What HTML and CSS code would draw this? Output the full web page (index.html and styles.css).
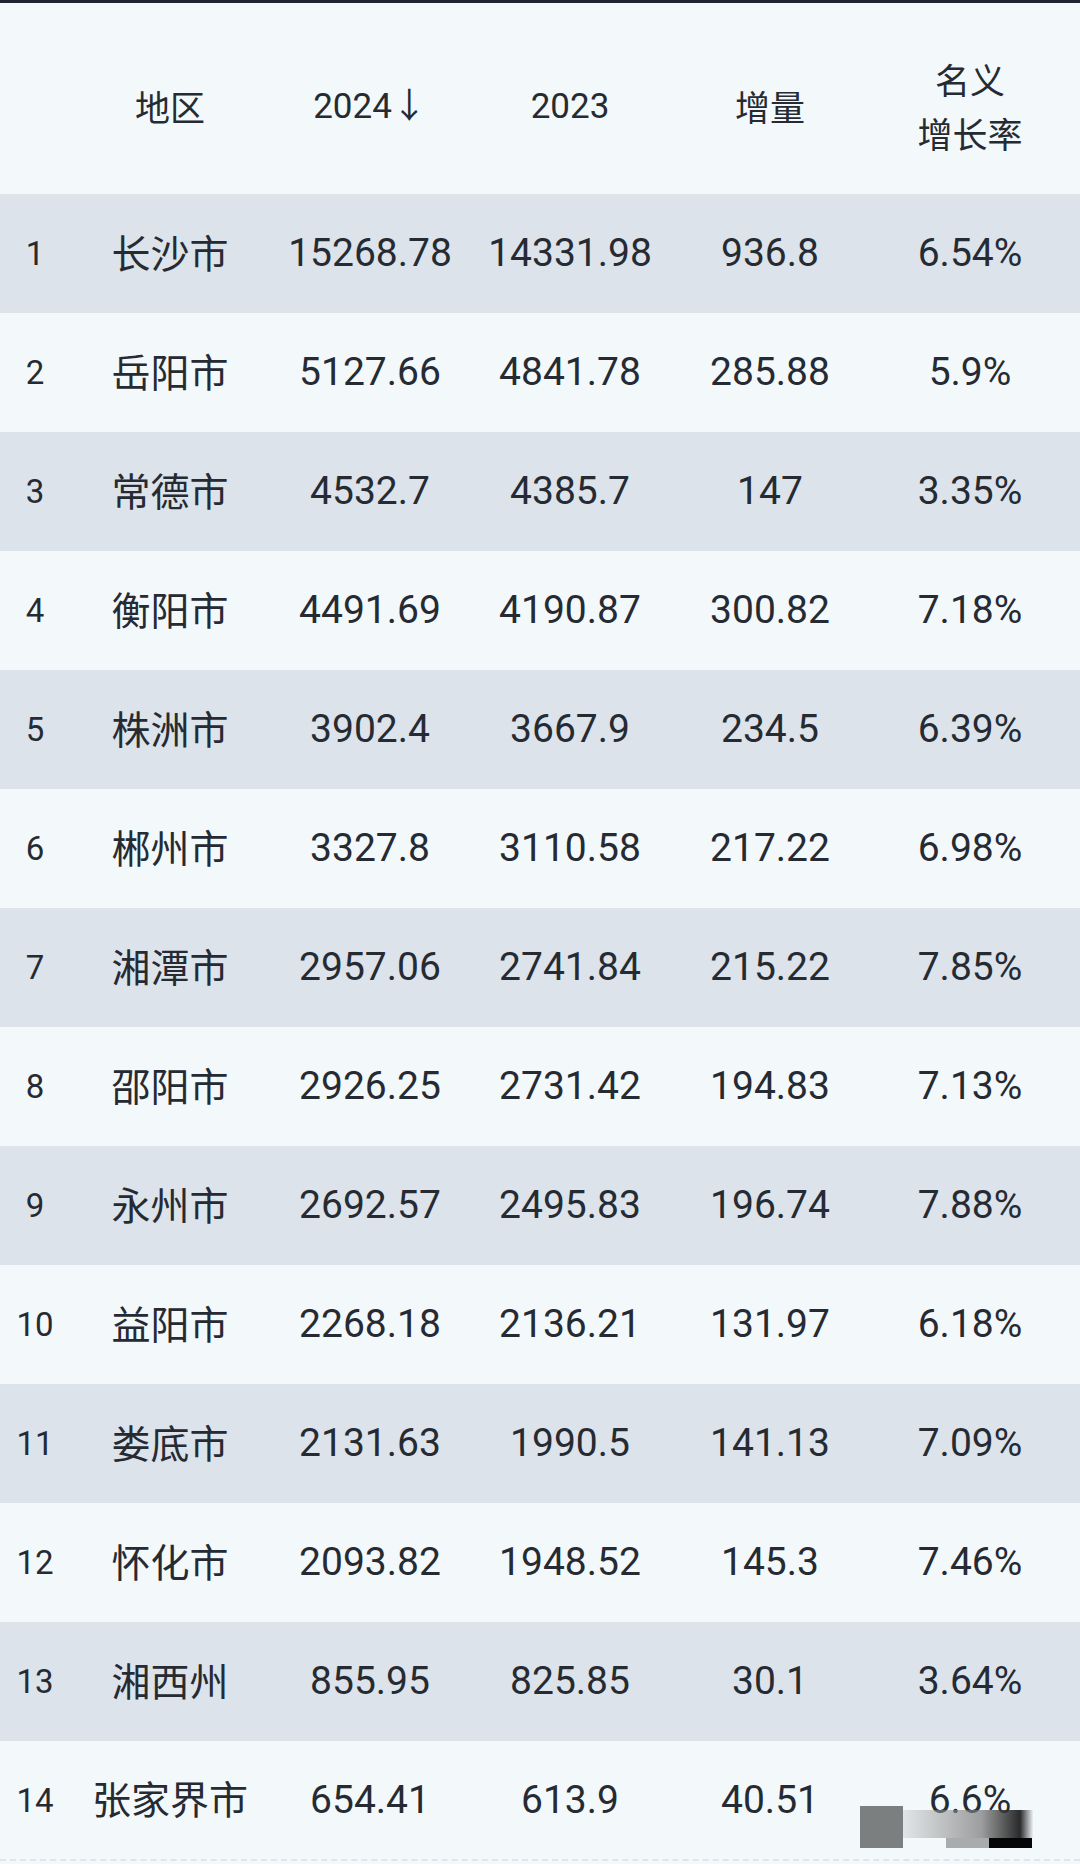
FILE: index.html
```html
<!DOCTYPE html>
<html lang="zh-CN">
<head>
<meta charset="utf-8">
<title>湖南各市州GDP</title>
<link rel="stylesheet" href="styles.css">
</head>
<body>
<div class="topbar"></div>
<div class="table">
  <div class="row head">
    <div class="rank"></div>
    <div class="cell name">地区</div>
    <div class="cell">2024↓</div>
    <div class="cell">2023</div>
    <div class="cell name">增量</div>
    <div class="cell name two"><span>名义</span><span>增长率</span></div>
  </div>
  <div class="row odd"><div class="rank">1</div><div class="cell name">长沙市</div><div class="cell">15268.78</div><div class="cell">14331.98</div><div class="cell">936.8</div><div class="cell">6.54%</div></div>
  <div class="row even"><div class="rank">2</div><div class="cell name">岳阳市</div><div class="cell">5127.66</div><div class="cell">4841.78</div><div class="cell">285.88</div><div class="cell">5.9%</div></div>
  <div class="row odd"><div class="rank">3</div><div class="cell name">常德市</div><div class="cell">4532.7</div><div class="cell">4385.7</div><div class="cell">147</div><div class="cell">3.35%</div></div>
  <div class="row even"><div class="rank">4</div><div class="cell name">衡阳市</div><div class="cell">4491.69</div><div class="cell">4190.87</div><div class="cell">300.82</div><div class="cell">7.18%</div></div>
  <div class="row odd"><div class="rank">5</div><div class="cell name">株洲市</div><div class="cell">3902.4</div><div class="cell">3667.9</div><div class="cell">234.5</div><div class="cell">6.39%</div></div>
  <div class="row even"><div class="rank">6</div><div class="cell name">郴州市</div><div class="cell">3327.8</div><div class="cell">3110.58</div><div class="cell">217.22</div><div class="cell">6.98%</div></div>
  <div class="row odd"><div class="rank">7</div><div class="cell name">湘潭市</div><div class="cell">2957.06</div><div class="cell">2741.84</div><div class="cell">215.22</div><div class="cell">7.85%</div></div>
  <div class="row even"><div class="rank">8</div><div class="cell name">邵阳市</div><div class="cell">2926.25</div><div class="cell">2731.42</div><div class="cell">194.83</div><div class="cell">7.13%</div></div>
  <div class="row odd"><div class="rank">9</div><div class="cell name">永州市</div><div class="cell">2692.57</div><div class="cell">2495.83</div><div class="cell">196.74</div><div class="cell">7.88%</div></div>
  <div class="row even"><div class="rank">10</div><div class="cell name">益阳市</div><div class="cell">2268.18</div><div class="cell">2136.21</div><div class="cell">131.97</div><div class="cell">6.18%</div></div>
  <div class="row odd"><div class="rank">11</div><div class="cell name">娄底市</div><div class="cell">2131.63</div><div class="cell">1990.5</div><div class="cell">141.13</div><div class="cell">7.09%</div></div>
  <div class="row even"><div class="rank">12</div><div class="cell name">怀化市</div><div class="cell">2093.82</div><div class="cell">1948.52</div><div class="cell">145.3</div><div class="cell">7.46%</div></div>
  <div class="row odd"><div class="rank">13</div><div class="cell name">湘西州</div><div class="cell">855.95</div><div class="cell">825.85</div><div class="cell">30.1</div><div class="cell">3.64%</div></div>
  <div class="row even last"><div class="rank">14</div><div class="cell name">张家界市</div><div class="cell">654.41</div><div class="cell">613.9</div><div class="cell">40.51</div><div class="cell">6.6%</div></div>
</div>
<div class="mark" aria-hidden="true">
  <div class="mk-a"></div>
  <div class="mk-band"></div>
  <div class="mk-b"></div>
  <div class="mk-c"></div>
</div>
</body>
</html>
```
FILE: styles.css
```css
* { box-sizing: border-box; }
html, body {
  margin: 0;
  padding: 0;
  background: #f3f8fa;
}
body {
  width: 1080px;
  height: 1864px;
  overflow: hidden;
  position: relative;
  font-family: Roboto, "Noto Sans CJK SC", sans-serif;
  color: #262b33;
}
.topbar {
  height: 3px;
  background: #1f2431;
}
.table {
  display: flex;
  flex-direction: column;
}
.row {
  display: grid;
  grid-template-columns: 70px repeat(5, 200px) 10px;
  height: 119px;
  align-items: center;
}
.row.head {
  height: 191px;
  padding-top: 16px;
  background: #f3f8fa;
}
.row.odd { background: #dce3ea; }
.row.even { background: #f3f8fb; }
.row.last {
  height: 120px;
  border-bottom: 2px dashed #dfe5ea;
}
.rank {
  text-align: center;
  font-size: 33px;
  line-height: 1;
}
.cell {
  text-align: center;
  font-size: 39px;
  line-height: 1;
  white-space: nowrap;
}
.cell.name {
  font-family: "Noto Sans CJK SC", sans-serif;
  padding-bottom: 5px;
}
.head .cell { font-size: 35px; }
.head .cell.name { padding-bottom: 2px; }
.cell.two {
  display: flex;
  flex-direction: column;
  align-items: center;
  line-height: 54px;
  padding-bottom: 2px;
  padding-top: 0;
}
.mark {
  position: absolute;
  left: 860px;
  top: 1806px;
  width: 175px;
  height: 42px;
}
.mk-a {
  position: absolute;
  left: 0;
  top: 0;
  width: 43px;
  height: 42px;
  background: #7b7f80;
}
.mk-band {
  position: absolute;
  left: 43px;
  top: 4px;
  width: 130px;
  height: 28px;
  background: linear-gradient(90deg, rgba(200,200,200,0.4), rgba(120,120,120,0.7) 60%, rgba(20,20,20,0.9) 90%, rgba(220,220,220,0.3));
}
.mk-b {
  position: absolute;
  left: 86px;
  top: 32px;
  width: 43px;
  height: 10px;
  background: #a9acac;
}
.mk-c {
  position: absolute;
  left: 129px;
  top: 32px;
  width: 43px;
  height: 10px;
  background: #050608;
}
```
